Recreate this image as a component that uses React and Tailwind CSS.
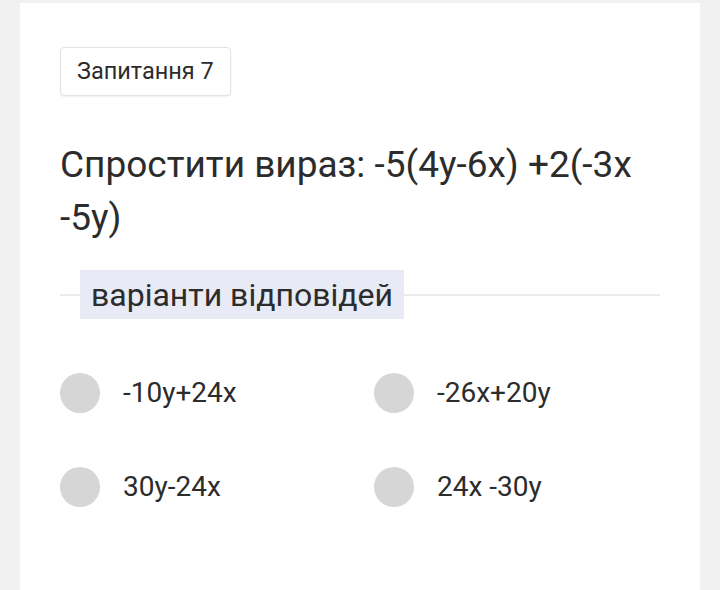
const options = ["-10y+24x", "-26x+20y", "30y-24x", "24x -30y"]

const App = () => {
  return (
    <div className="h-[590px] bg-[#f1f1f1] px-[20px] pt-[3px] overflow-hidden" style={{ fontFamily: "Roboto, 'Noto Sans', sans-serif" }}>
      <div className="h-full bg-white px-[40px] pt-[44px] text-[#2c2c2c]">
        {/* Question number */}
        <div className="inline-flex h-[49px] items-center rounded-[4px] border border-[#e2e2e2] px-[16px] text-[23.5px] shadow-[0_1px_2px_rgba(0,0,0,0.06)]">
          Запитання 7
        </div>

        {/* Question */}
        <p className="mt-[42px] text-[37px] leading-[53px]">
          Спростити вираз: -5(4y-6x) +2(-3x -5y)
        </p>

        {/* Answers legend */}
        <div className="mt-[26px] flex items-center">
          <div className="h-[2px] w-[20px] bg-[#ececec]"></div>
          <div className="flex h-[49px] items-center bg-[#e8eaf6] px-[11px] text-[32px]">
            варіанти відповідей
          </div>
          <div className="h-[2px] flex-1 bg-[#ececec]"></div>
        </div>

        {/* Options */}
        <div className="mt-[54px] grid grid-cols-[314px_1fr] gap-y-[54px]">
          {options.map((opt, i) => (
            <div key={i} className="flex items-center gap-[23px]">
              <div className="h-[40px] w-[40px] rounded-full bg-[#d6d6d6]"></div>
              <span className="text-[28px] leading-[40px]">{opt}</span>
            </div>
          ))}
        </div>
      </div>
    </div>
  )
}

export default App
